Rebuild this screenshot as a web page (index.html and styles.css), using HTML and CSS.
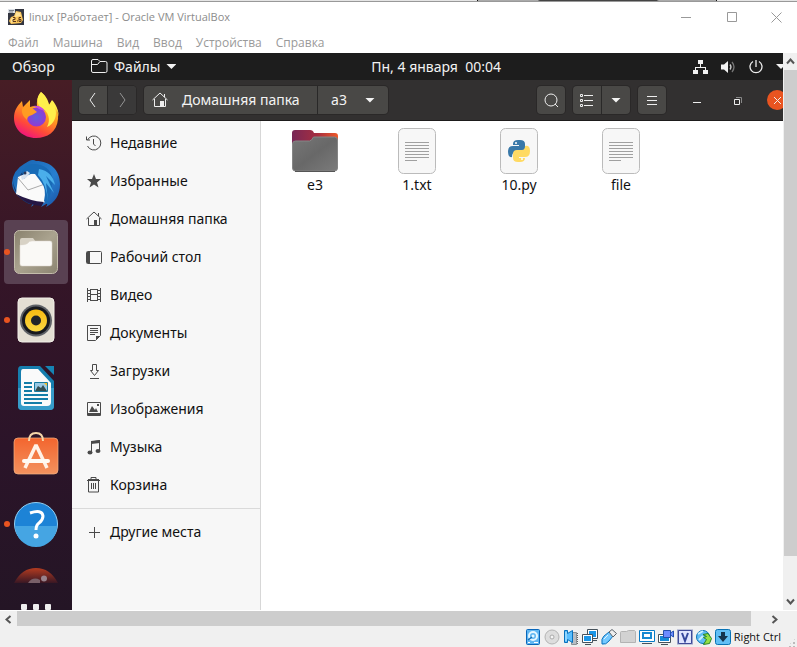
FILE: index.html
```html
<!DOCTYPE html>
<html lang="ru">
<head>
<meta charset="utf-8">
<title>linux [Работает] - Oracle VM VirtualBox</title>
<link rel="stylesheet" href="styles.css">
</head>
<body>
<div class="backdrop"><span class="backdrop-tab"></span></div>
<header class="titlebar">
  <svg class="app-icon" width="16" height="16" viewBox="0 0 16 16"><path fill="#343641" d="M0 0h16v16H0z"/><path fill="#fbc65b" d="M8 2l5 1 2 8-2 3-10 1-2-3 2-4 3-1z"/><path fill="#ffe39a" d="M8 3l4 1 1 3-6 1zM3 10l3-2-1 5-2 1z"/><path fill="#dce0e6" d="M0 0h7v4H0z"/><path stroke="#777e89" d="M1 1.500h5M1 3h4"/><path fill="none" stroke="#59341b" d="M5 8.500h2v2H5v2h3M9 12h1M13 8.500h-2v4h2v-2h-2"/></svg>
  <h1>linux [Работает] - Oracle VM VirtualBox</h1>
  <div class="window-controls">
    <button aria-label="Свернуть"><svg width="11" height="11"><path d="M0 5.500h10"/></svg></button>
    <button aria-label="Развернуть"><svg width="11" height="11"><path d="M.5.5h9v9h-9z"/></svg></button>
    <button aria-label="Закрыть"><svg width="11" height="11"><path d="M.5.500l10 10M10.500.500l-10 10"/></svg></button>
  </div>
</header>
<nav class="menubar"><button>Файл</button><button>Машина</button><button>Вид</button><button>Ввод</button><button>Устройства</button><button>Справка</button></nav>

<div class="viewer">
<main class="guest">
  <div class="topbar">
    <div class="topbar-left">
      <button class="activities">Обзор</button>
      <button class="app-menu"><svg width="17" height="15" viewBox="0 0 17 15"><path d="M.5 12V2Q.5.500 2 .500h5l2 2h5.500q1.500 0 1.500 1.500v8q0 1.500-1.500 1.500H2Q.5 13.500.5 12zM.5 5.500h6l2.500-3"/></svg>Файлы<i class="caret"></i></button>
    </div>
    <time>Пн, 4 января&nbsp; 00:04</time>
    <div class="tray">
      <svg width="15" height="14" viewBox="0 0 15 14"><path fill="#f2f2f2" d="M5 0h5v4H8v3h5v3h2v4h-5v-4h2V8H3v2h2v4H0v-4h2V7h5V4H5z"/></svg>
      <svg width="15" height="14" viewBox="0 0 15 14"><path fill="#f2f2f2" d="M0 4.500h3L7 1v12L3 9.500H0z"/><path fill="none" stroke="#ccc" stroke-width="1.300" d="M9 4.500q2 2.500 0 5"/><path fill="none" stroke="#777" stroke-width="1.300" d="M11 2q4 5 0 10"/></svg>
      <svg width="14" height="14" viewBox="0 0 14 14"><path fill="none" stroke="#eee" stroke-width="1.300" d="M4 1.500a6 6 0 1 0 6 0M7 0v7"/></svg>
      <i class="caret"></i>
    </div>
  </div>

  <div class="desktop">
    <aside class="dock">
      <button aria-label="Firefox"><svg width="48" height="48" viewBox="0 1 48 48"><defs><linearGradient id="fx" x1=".8" y1="0" x2=".3" y2="1"><stop offset="0" stop-color="#fff04b"/><stop offset=".45" stop-color="#ff9b20"/><stop offset=".75" stop-color="#ff4b38"/><stop offset="1" stop-color="#ef1280"/></linearGradient><radialGradient id="fp"><stop offset="0" stop-color="#5d60df"/><stop offset="1" stop-color="#9339d2"/></radialGradient></defs><path fill="url(#fx)" d="M29 1q4 3 6 9 2 2 2 4l3-4q7 8 6 18c-1 13-11 19-22 19C11 47 2 38 2 27c0-7 3-12 8-17l1 6 7-7v7q6-2 7 0-1-9 4-15z"/><path fill="#fff04b" d="M29 1c-5 5-4 11-1 15 9 4 11 13 7 20 7-3 11-11 8-20q5 8 3 13c2-6-1-15-6-20l-3 5C36 8 33 4 29 1z"/><circle cx="24.500" cy="26" r="9.500" fill="url(#fp)"/><path fill="#ff9c22" d="M10 18l4-4q6 2 11 7l-5 3q-5 1-5 5-6-5-5-11z"/><path fill="#c64ae5" d="M21 15q8-1 12 5l-6-2q-2-2-6-3z"/></svg></button>
      <button aria-label="Thunderbird"><svg width="48" height="48" viewBox="0 0 48 48"><defs><linearGradient id="tb" x1="0" y1="0" x2="1" y2="1"><stop offset="0" stop-color="#1762ae"/><stop offset=".6" stop-color="#287fd0"/><stop offset="1" stop-color="#1952a5"/></linearGradient></defs><path fill="url(#tb)" d="M17 1q4-2 7 0c14 0 24 9 24 23q0 16-14 23l2-4-7 4 4-7q-9 2-14 7l2-4Q1 38 0 23 1 10 12 4z"/><path fill="#183c72" d="M12 10q-9 9-5 24-5-5-6-13 0 15 16 23h5L13 34z"/><path fill="#fafafa" d="M6 17q9-5 19-3l9 9 1 14-3 6Q17 44 4 34z"/><path fill="#251644" d="M4 34q14 7 28 8l-3 4q-15-1-25-12z"/><path fill="none" stroke="#aaa" d="M6 18l10 12 17-6"/><path fill="#186bb7" d="M10 12q3-9 12-8c9 0 18 5 19 17L36 45l-4-4q3-12-3-19-3-4-6-8-6-1-11 5z"/><path fill="#4aaeea" d="M27 9q13 2 16 16l-9-9 8 17-8-10 2 18q-2-18-10-26z"/><path fill="#d8e2ef" d="M9 17l6-6 3 2-4 5-4 2z"/><circle cx="13" cy="13" r="1.500" fill="#2b3859"/></svg></button>
      <button class="current running" aria-label="Файлы"><svg width="48" height="48" viewBox="0 0 48 48"><defs><linearGradient id="ff" x1="0" y1="0" x2="1" y2="1"><stop offset="0" stop-color="#89816d"/><stop offset=".5" stop-color="#aaa38f"/><stop offset="1" stop-color="#8b8471"/></linearGradient></defs><rect x="2.500" y="2.500" width="43" height="43" rx="5" fill="url(#ff)" stroke="#c4bdac"/><path fill="#d8d2c5" d="M8 12q0-2 2-2h11l3 4h14v6H8z"/><path fill="#faf9f6" stroke="#ddd7cc" stroke-width=".5" d="M8 17q6 0 8-2 1-2 4-2h18q2 0 2 2v21q0 2-2 2H10q-2 0-2-2z"/></svg></button>
      <button class="running" aria-label="Rhythmbox"><svg width="48" height="48" viewBox="0 0 48 48"><defs><linearGradient id="rb" x2="0" y2="1"><stop stop-color="#f7ba12"/><stop offset="1" stop-color="#f9d742"/></linearGradient></defs><rect x="6" y="2" width="36" height="44" rx="4" fill="#e4dfd4" stroke="#f2efe8"/><circle cx="24" cy="24.500" r="16" fill="#5f6267"/><circle cx="24" cy="24.500" r="14" fill="#17191e"/><circle cx="24" cy="24.500" r="11" fill="url(#rb)"/><circle cx="24" cy="24.500" r="5" fill="#202329"/></svg></button>
      <button aria-label="LibreOffice Writer"><svg width="48" height="48" viewBox="0 0 48 48"><path fill="#167eae" d="M9 2h19l14 15v25q0 4-4 4H10q-4 0-4-4V6q0-4 3-4z"/><path fill="#379cc9" d="M6 24h36v18q0 4-4 4H10q-4 0-4-4z"/><path fill="#fafafa" d="M11 5h15l13 14v19q0 4-4 4H12q-3 0-3-3V8q0-3 2-3z"/><path fill="#1684b4" d="M33 2h9v9z"/><path stroke="#147da8" stroke-width="2" d="M12 19h8M12 23h8M12 27h8M12 31h24M12 35h24M12 39h18"/><path fill="#9ac9e4" stroke="#17799e" d="M22.500 18.500h13v9h-13z"/><path fill="#344e52" d="M23 27l3-5 3 2 2-3 4 6z"/><path fill="#f3bd22" d="M32 19h3v3z"/></svg></button>
      <button aria-label="Ubuntu Software"><svg width="48" height="48" viewBox="0 2 48 48"><defs><linearGradient id="us" x2="0" y2="1"><stop stop-color="#f3652e"/><stop offset="1" stop-color="#f3925e"/></linearGradient></defs><rect x="2" y="8" width="44" height="36" rx="4" fill="url(#us)" stroke="#f4b385" stroke-width=".7"/><path fill="none" stroke="#f6d6a9" stroke-width="2" d="M17 11q0-8 7-8t7 8"/><path fill="none" stroke="#fff2e7" stroke-width="3.500" d="M13 38l10.500-22h1L35 38"/><path stroke="#fffaf3" stroke-width="4" stroke-linecap="round" d="M12 31h24"/></svg></button>
      <button class="running" aria-label="Справка"><svg width="48" height="48" viewBox="0 0 48 48"><circle cx="24" cy="24" r="21.500" fill="#1d83d6" stroke="#91cff2"/><path fill="#45a5e3" d="M3 26h42a21 21 0 0 1-42 0z"/><path fill="none" stroke="#fff" stroke-width="3" d="M18 13q12-4 13 3 0 4-4 7-3 2-3 7"/><circle cx="24" cy="36" r="2.500" fill="#fff"/></svg></button>
      <button class="partial" aria-label="Ubuntu"><svg width="48" height="17" viewBox="0 0 48 17"><defs><linearGradient id="ub" x2="0" y2="1"><stop stop-color="#b43b20"/><stop offset="1" stop-color="#391724"/></linearGradient></defs><path fill="url(#ub)" d="M2 17q8-15 22-15t22 15z"/><path fill="#796069" d="M16 17q5-7 12-3v3z"/><circle cx="32" cy="12.500" r="3" fill="#98828c"/></svg></button>
      <button class="apps" aria-label="Показать приложения"><i></i><i></i><i></i></button>
    </aside>

    <section class="files">
      <div class="toolbar">
        <div class="group"><button class="square" aria-label="Назад"><svg width="10" height="16"><path d="M7 1L2 8l5 7"/></svg></button><button class="square dim" aria-label="Вперёд"><svg width="10" height="16"><path d="M3 1l5 7-5 7"/></svg></button></div>
        <div class="group path"><button class="home"><svg width="16" height="16" viewBox="0 0 16 16"><path d="M.5 8L8 1l7.500 7M2.500 7v7.500h11V7M12.500 2v3"/><path class="solid" d="M8 9h4v6H8z"/></svg>Домашняя папка</button><button class="folder">a3<i class="caret"></i></button></div>
        <div class="group find"><button class="square" aria-label="Поиск"><svg width="15" height="15"><circle cx="7" cy="7" r="6"/><path d="M11 11l3 3"/></svg></button></div>
        <div class="group"><button class="square" aria-label="Список"><svg width="14" height="13"><path d="M.5.500h2v2h-2zM.5 5.500h2v2h-2zM.5 10.500h2v2h-2zM4 1.500h9M4 6.500h9M4 11.500h9"/></svg></button><button class="square" aria-label="Вид"><i class="caret"></i></button></div>
        <div class="group"><button class="square" aria-label="Меню"><svg width="12" height="11"><path d="M1 1.500h10M1 5.500h10M1 9.500h10"/></svg></button></div>
        <div class="file-window-controls"><button aria-label="Свернуть"><svg width="9" height="9"><path d="M0 6.500h8"/></svg></button><button aria-label="Восстановить"><svg width="9" height="9"><path d="M1.500 3.500h5v5h-5z"/><path stroke="#888" d="M3 1.500h5.500V7"/></svg></button><button class="close" aria-label="Закрыть"><svg width="9" height="9"><path d="M1 1l7 7M8 1L1 8"/></svg></button></div>
      </div>
      <div class="browser">
        <nav class="places">
          <a href="#"><svg width="16" height="16"><path d="M1.500 5a7 7 0 1 1 0 6M.5 1.500V5H4M7.500 4v5l2 2"/></svg>Недавние</a>
          <a href="#"><svg width="16" height="16"><path class="solid" d="M8 1l2 5h5l-4 3.500 1.500 5L8 11.500l-4.500 3 1.500-5L1 6h5z"/></svg>Избранные</a>
          <a href="#"><svg width="16" height="16"><path d="M.5 8L8 1l7.500 7M2.500 7v7.500h11V7M12.500 2v3"/><path class="solid" d="M8 9h3v5H8z"/></svg>Домашняя папка</a>
          <a href="#"><svg width="16" height="16"><rect x=".5" y="2.500" width="15" height="12" rx="1"/><path class="solid" d="M1 3h3v11H1z"/></svg>Рабочий стол</a>
          <a href="#"><svg width="16" height="16"><path d="M1.500 1v14M14.500 1v14M4.500 2v12M11.500 2v12M4 2.500h8M4 7.500h8M4 13.500h8M1 3.500h3M1 6.500h3M1 9.500h3M1 12.500h3M12 3.500h3M12 6.500h3M12 9.500h3M12 12.500h3"/></svg>Видео</a>
          <a href="#"><svg width="16" height="16"><path d="M1.500.500h13v10l-5 5h-8zM4 3.500h8M4 5.500h8M4 7.500h8M4 9.500h5"/><path class="solid" d="M10 15v-4h4z"/></svg>Документы</a>
          <a href="#"><svg width="16" height="16"><path d="M6.500 1.500h4v6h2l-4 5-4-5h2zM4 15.500h9"/></svg>Загрузки</a>
          <a href="#"><svg width="16" height="16"><path d="M1.500 1.500h13v13h-13zM2 13.500h12"/><path class="solid" d="M3 11l3-6 3 4 1-2 2 4zM11 3h2v2h-2zM2 12h12v2H2z"/></svg>Изображения</a>
          <a href="#"><svg width="16" height="16"><path d="M5.500 13V3L13.500 1.500V11"/><path class="solid" d="M5 2l9-1v3L5 5z"/><ellipse class="solid" cx="4" cy="13.500" rx="2.500" ry="2"/><ellipse class="solid" cx="12" cy="12" rx="2.500" ry="2"/></svg>Музыка</a>
          <a href="#"><svg width="16" height="16"><path d="M1 3.500h13M5 2.500v-2h5v2M2.500 4v11h10V4M5.500 6v6M7.500 6v6M9.500 6v6"/><path class="solid" d="M2 2h11v2H2z"/></svg>Корзина</a>
          <hr>
          <a href="#"><svg width="16" height="16"><path d="M8.500 3v11M3 8.500h11"/></svg>Другие места</a>
        </nav>
        <div class="icons">
          <button><svg width="48" height="48" viewBox="0 0 48 48"><defs><linearGradient id="fo"><stop stop-color="#782756"/><stop offset=".55" stop-color="#a52e40"/><stop offset="1" stop-color="#ef5928"/></linearGradient><linearGradient id="fg" x1="0" y1="0" x2="1" y2="1"><stop stop-color="#777"/><stop offset=".5" stop-color="#686868"/><stop offset="1" stop-color="#7b7b7b"/></linearGradient></defs><path fill="url(#fo)" d="M1 6q0-3 3-3h15q3 0 4 3h21q3 0 3 3v13H1z"/><path fill="url(#fg)" stroke="#858585" d="M1.500 17q0-3 3-3h14q2 0 4-4h21q3 0 3 3v28q0 3-3 3h-39q-3 0-3-3z"/><path stroke="#555" d="M4 44.500h40"/></svg>e3</button>
          <button><svg width="48" height="48" viewBox="0 0 48 48"><rect x="5.500" y="1.500" width="37" height="45" rx="5" fill="#f7f7f7" stroke="#bbb"/><path stroke="#a0a0a0" d="M12 15.500h24M12 18.500h24M12 21.500h24M12 24.500h24M12 27.500h24M12 30.500h24M12 33.500h12"/></svg>1.txt</button>
          <button><svg width="48" height="48" viewBox="0 0 48 48"><rect x="5.500" y="1.500" width="37" height="45" rx="5" fill="#f7f7f7" stroke="#bbb"/><path fill="#3978a8" d="M18 17q0-4 5-4h2q5 0 5 4v4q0 4-4 4h-5q-4 0-4 5-4 1-4-6 0-5 5-5h6v-1h-6z"/><path fill="#ffda63" d="M30 19q5-1 5 5 0 6-5 6h-6v1h6q0 4-5 4h-2q-5 0-5-4v-4q0-4 4-4h5q3 0 3-4z"/><circle cx="21" cy="16" r="1" fill="#fff"/><circle cx="27" cy="32" r="1" fill="#fff"/></svg>10.py</button>
          <button><svg width="48" height="48" viewBox="0 0 48 48"><rect x="5.500" y="1.500" width="37" height="45" rx="5" fill="#f7f7f7" stroke="#bbb"/><path stroke="#a0a0a0" d="M12 15.500h24M12 18.500h24M12 21.500h24M12 24.500h24M12 27.500h24M12 30.500h24M12 33.500h12"/></svg>file</button>
        </div>
      </div>
    </section>
  </div>
</main>
<div class="scroll vertical"><button aria-label="Вверх"><svg width="9" height="7"><path d="M1 5.500l3.500-4 3.500 4"/></svg></button><div class="track"><i></i></div><button aria-label="Вниз"><svg width="9" height="7"><path d="M1 1.500l3.500 4 3.500-4"/></svg></button></div>
<div class="scroll horizontal"><button aria-label="Влево"><svg width="7" height="9"><path d="M5.500 1l-4 3.500 4 3.500"/></svg></button><div class="track"><i></i></div><button aria-label="Вправо"><svg width="7" height="9"><path d="M1.500 1l4 3.500-4 3.500"/></svg></button></div>
</div>

<footer class="status">
  <svg viewBox="0 0 16 16"><rect x="1.500" y=".5" width="13" height="15" rx="1" fill="#60b6f2" stroke="#0866ba"/><circle cx="8" cy="7" r="4" fill="none" stroke="#e5f6ff" stroke-width="2"/><circle cx="8" cy="7" r="1.500" fill="#e5f6ff"/><path stroke="#146eb6" stroke-width="1.500" d="M3 11l4-3"/><path stroke="#fff" d="M9 13.500h4M3 13.500h2"/></svg>
  <svg viewBox="0 0 16 16"><circle cx="8" cy="8" r="7" fill="#ddd" stroke="#b4b4b4"/><circle cx="8" cy="8" r="2" fill="#f5f5f5" stroke="#aaa"/></svg>
  <svg viewBox="0 0 16 16"><path fill="#b8bdc2" stroke="#8c9195" d="M8.500 3.500h5v12h-5z"/><path stroke="#666" stroke-dasharray="1 1" d="M14.500 4v11"/><path fill="#59bfff" stroke="#0871bd" d="M1.500 1.500h3v3l5-3v12l-5-3v3h-3z"/><path stroke="#c6edff" d="M3 3v9"/></svg>
  <svg viewBox="0 0 16 16"><path fill="#fff" stroke="#46525b" d="M5.500.500h10v9h-10z"/><path fill="#1995e7" d="M7 2h7v6H7z"/><path fill="#fff" stroke="#46525b" d="M.5 5.500h10v8H.5z"/><path fill="#1995e7" d="M2 7h7v5H2z"/><path stroke="#46525b" d="M3 15.500h6M11 11.500h4"/></svg>
  <svg viewBox="0 0 16 16"><path fill="#75c9ff" stroke="#0871bd" d="M1 14q-1-4 2-7l5-4 4 4-4 5q-3 4-7 3z"/><path fill="#eee" stroke="#596168" d="M8 3l3-2.500 4.500 4L12 8z"/><path stroke="#dff5ff" d="M3 10l4-4"/></svg>
  <svg viewBox="0 0 16 16"><path fill="#d2d2d2" stroke="#b3b3b3" d="M.5 13.500v-10q0-1 1-1h5l2-1h6l1 1v11z"/></svg>
  <svg viewBox="0 0 16 16"><path fill="#fff" stroke="#087bc5" d="M.5 1.500h15v11H.5z"/><path fill="#fff" stroke="#1789d1" stroke-width="2" d="M4 4h8v5H4z"/><path stroke="#46525b" d="M3 14.500h10"/></svg>
  <svg viewBox="0 0 16 16"><path fill="#fff" stroke="#46525b" d="M.5 5.500h12v8H.5z"/><path fill="#168bd7" d="M2 7h9v5H2z"/><path fill="#6c8bff" stroke="#244fae" d="M5.500 1.500h7v7h-7zM12.500 4l3-2v6l-3-2"/><path stroke="#46525b" d="M3 15.500h7"/></svg>
  <svg viewBox="0 0 16 16"><path stroke="#3e4c9b" stroke-width="15" stroke-dasharray="1 1" d="M.5 8h15"/><path fill="#dfe5ff" stroke="#3f4b99" d="M1.500 1.500h13v13h-13z"/><path fill="none" stroke="#35479c" stroke-width="2" d="M5 4l3 8 3-8"/></svg>
  <svg viewBox="0 0 16 16"><circle cx="7" cy="8" r="6.500" fill="#60bdf5" stroke="#0873b5"/><path stroke="#c9efff" stroke-width="2" d="M2 5l5-3M3 11l4-4"/><path fill="#94df44" stroke="#298628" d="M7 5.500l5-1 3.500 5-2 5-6 1 3-5-3-2 3-1z"/></svg>
  <svg viewBox="0 0 16 16"><rect x=".5" y=".5" width="15" height="15" rx="2" fill="#61bff5" stroke="#0873b5"/><path fill="#14354f" d="M6 3h4v4h3l-5 6-5-6h3z"/></svg>
  <span>Right Ctrl</span><i class="grip"></i>
</footer>
</body>
</html>
```
FILE: styles.css
```css
* { box-sizing: border-box; }
body {
  margin: 0;
  height: 100vh;
  display: flex;
  flex-direction: column;
  overflow: hidden;
  background: #fff;
  font: 14px/20px "Noto Sans", "Open Sans", sans-serif;
}
button { border: 0; padding: 0; margin: 0; background: none; color: inherit; font: inherit; }
svg { display: block; flex: none; fill: none; }

.backdrop { display: flex; flex: none; height: 2px; padding-left: 477px; background: #e5e5e5; border-bottom: 1px solid #999; }
.backdrop-tab { width: 240px; background: linear-gradient(90deg, #aaa 25%, #444 26%, #444 75%, #aaa 76%); border: solid #111; border-width: 0 1px; }

.titlebar { display: flex; align-items: center; flex: none; height: 30px; padding-left: 8px; color: #8c8c8c; }
.titlebar h1 { flex: 1; margin: 0 0 0 5px; font: 11px/20px "Open Sans", sans-serif; }
.window-controls { display: flex; }
.window-controls button { display: grid; place-items: center; width: 46px; height: 28px; }
.window-controls button:last-child { width: 42px; }
.window-controls svg { stroke: #999; }

.menubar { display: flex; flex: none; gap: 14px; height: 21px; padding-left: 8px; color: #999; font: 12px/20px "Open Sans", sans-serif; }

.viewer { flex: 1; min-height: 0; display: grid; grid-template: minmax(0, 1fr) 17px / minmax(0, 1fr) 14px; background: #f0f0f0; }
.guest { display: flex; flex-direction: column; overflow: hidden; }

.topbar { display: flex; align-items: center; flex: none; height: 27px; background: #1d1d1d; color: #f2f2f2; }
.topbar-left { flex: 1; display: flex; gap: 36px; padding-left: 12px; }
.app-menu { display: flex; align-items: center; gap: 6px; }
.app-menu svg { stroke: #eee; }
.caret { width: 10px; height: 5px; background: currentColor; clip-path: polygon(0 0, 100% 0, 50% 100%); }
.tray { display: flex; align-items: center; gap: 13px; width: 282px; padding-left: 192px; overflow: hidden; }
.tray .caret { flex: none; }

.desktop { flex: 1; min-height: 0; display: flex; }
.dock { flex: none; width: 72px; padding-top: 4px; overflow: hidden; background: linear-gradient(#471d25, #351527 35%, #2b1429 70%, #241525); }
.dock button { position: relative; display: grid; place-items: center; width: 64px; height: 64px; margin: 0 4px 4px; border-radius: 4px; }
.dock .current { background: #594152; }
.dock .running::before { content: ""; position: absolute; left: 0; top: 29px; width: 6px; height: 6px; border-radius: 50%; background: #e95420; }
.dock .partial { height: 17px; margin: 10px 4px 0; }
.dock .apps { display: flex; justify-content: center; align-items: flex-start; gap: 6px; height: 12px; margin-top: 21px; }
.apps i { width: 6px; height: 6px; border-radius: 1px; background: #eee; }

.files { flex: 1; min-width: 0; display: flex; flex-direction: column; background: #fff; }
.toolbar { display: flex; align-items: center; flex: none; gap: 8px; height: 41px; padding-left: 7px; overflow: hidden; background: #323030; border-bottom: 1px solid #1d1b1b; color: #f3f3f3; }
.toolbar svg { stroke: #eee; }
.toolbar .solid { fill: #eee; stroke: none; }
.group { display: flex; flex: none; height: 28px; border-radius: 4px; background: #494846; box-shadow: 0 0 0 1px #2a2828; }
.group button { display: flex; align-items: center; justify-content: center; }
.group button + button { border-left: 1px solid #292828; }
.square { width: 28px; }
.group .square + .square { width: 29px; }
.dim { background: #3a3939; border-radius: 0 4px 4px 0; }
.dim svg { opacity: .5; }
.group .home { justify-content: flex-start; gap: 14px; width: 173px; padding-left: 8px; }
.folder { gap: 18px; width: 71px; }
.find { margin-left: auto; }
.file-window-controls { display: flex; align-items: center; flex: none; width: 109px; padding-left: 13px; gap: 20px; }
.file-window-controls button { display: grid; place-items: center; flex: none; width: 20px; height: 20px; border-radius: 50%; }
.file-window-controls .close { background: #e95420; }

.browser { flex: 1; min-height: 0; display: flex; }
.places { flex: none; width: 189px; padding-top: 3px; background: #f7f7f7; border-right: 1px solid #d7d7d7; }
.places a { display: flex; align-items: center; gap: 8px; height: 38px; padding-left: 14px; color: #111; text-decoration: none; }
.places svg { stroke: #4a4a4a; }
.places .solid { fill: #4a4a4a; stroke: none; }
.places hr { height: 1px; margin: 4px 0; border: 0; background: #dadada; }
.icons { flex: 1; display: grid; grid-template-columns: repeat(auto-fill, 102px); align-content: start; padding: 6px 0 0 3px; color: #111; }
.icons button { display: flex; flex-direction: column; align-items: center; }

.scroll { display: flex; }
.scroll button { display: grid; place-items: center; flex: none; width: 17px; height: 17px; }
.scroll svg { stroke: #555; stroke-width: 2; }
.track { flex: 1; display: flex; }
.track i { background: #cdcdcd; }
.vertical { flex-direction: column; padding-left: 1px; }
.vertical button { width: 13px; }
.vertical .track { flex-direction: column; }
.vertical .track i { height: 93%; }
.horizontal { grid-column: 1 / -1; padding-right: 14px; border-top: 1px solid #fff; }
.horizontal .track i { width: 98%; height: 15px; }

.status { display: flex; align-items: center; justify-content: flex-end; flex: none; gap: 3px; height: 20px; padding-right: 1px; background: #f0f0f0; color: #111; font: 11px/16px "Open Sans", sans-serif; }
.status svg { width: 16px; height: 16px; }
.grip { align-self: flex-end; width: 9px; height: 9px; margin-left: 3px; background: conic-gradient(#bbb 25%, transparent 0) 0 0 / 4px 4px; clip-path: polygon(100% 0, 100% 100%, 0 100%); }
```
